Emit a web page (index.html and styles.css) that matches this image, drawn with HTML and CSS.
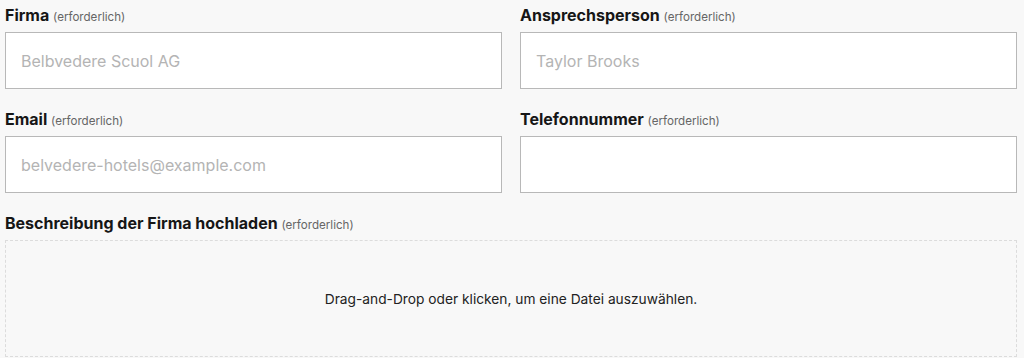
FILE: index.html
```html
<!DOCTYPE html>
<html lang="de">
<head>
    <meta charset="UTF-8">
    <meta name="viewport" content="width=device-width, initial-scale=1.0">
    <title>Firmenangaben</title>
    <link rel="stylesheet" href="styles.css">
</head>
<body>
    <form class="company-form">
        <div class="form-row">
            <div class="form-group">
                <label for="firma">Firma <span class="required">(erforderlich)</span></label>
                <input type="text" id="firma" placeholder="Belbvedere Scuol AG">
            </div>
            <div class="form-group">
                <label for="kontakt">Ansprechsperson <span class="required">(erforderlich)</span></label>
                <input type="text" id="kontakt" placeholder="Taylor Brooks">
            </div>
        </div>

        <div class="form-row">
            <div class="form-group">
                <label for="email">Email <span class="required">(erforderlich)</span></label>
                <input type="email" id="email" placeholder="belvedere-hotels@example.com">
            </div>
            <div class="form-group">
                <label for="telefon">Telefonnummer <span class="required">(erforderlich)</span></label>
                <input type="tel" id="telefon">
            </div>
        </div>

        <div class="form-group">
            <label>Beschreibung der Firma hochladen <span class="required">(erforderlich)</span></label>
            <div class="dropzone">Drag-and-Drop oder klicken, um eine Datei auszuwählen.</div>
        </div>
    </form>
</body>
</html>
```

FILE: styles.css
```css
body {
    margin: 0;
    padding: 0 7px 0 5px;
    background-color: #f8f8f8;
    font-family: 'Inter', 'Liberation Sans', sans-serif;
    color: #161616;
}
.form-row {
    display: grid;
    grid-template-columns: 1fr 1fr;
    column-gap: 18px;
}
.form-group {
    margin-bottom: 15px;
}
label {
    display: block;
    height: 24px;
    padding-top: 3px;
    margin-bottom: 5px;
    font-size: 16px;
    line-height: 24px;
    font-weight: 700;
}
.required {
    font-size: 11.6px;
    line-height: 1;
    font-weight: 400;
    color: #666;
}
input {
    display: block;
    box-sizing: border-box;
    width: 100%;
    height: 57px;
    padding: 0 15px;
    border: 1px solid #b8b8b8;
    background-color: #fff;
    font-family: inherit;
    font-size: 16px;
    color: #161616;
    outline: none;
}
input::placeholder {
    color: #b4b4b4;
}
.dropzone {
    display: flex;
    align-items: center;
    justify-content: center;
    height: 115px;
    border: 1px dashed #dcdcdc;
    font-size: 13.75px;
    color: #222;
    cursor: pointer;
}
```
